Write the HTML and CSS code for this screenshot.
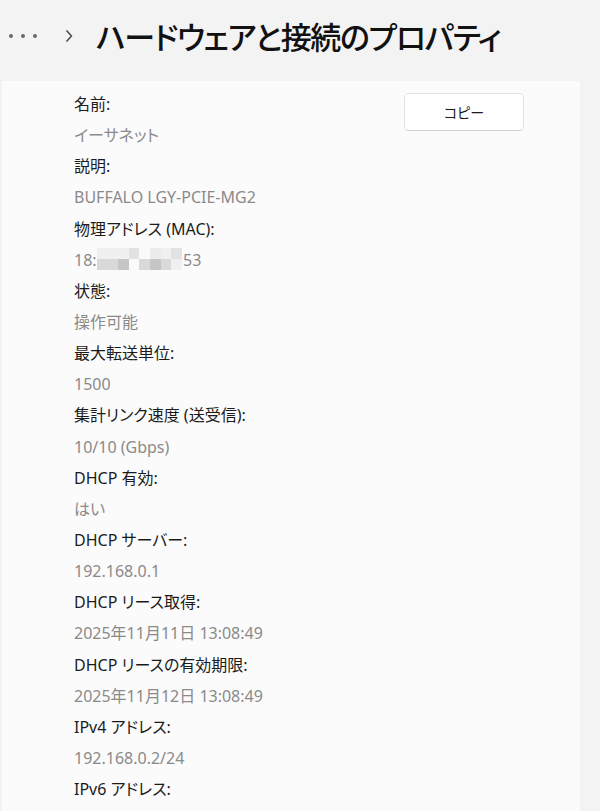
FILE: index.html
```html
<!DOCTYPE html>
<html lang="ja">

<head>
	<meta charset="utf-8" />
	<title>ハードウェアと接続のプロパティ</title>
	<link rel="stylesheet" href="styles.css">
</head>

<body>
	<div class="header">
		<div class="dots"><span></span><span></span><span></span></div>
		<svg class="chevron" viewBox="0 0 10 14" width="10" height="14">
			<polyline points="2.5 1.5, 7.5 7, 2.5 12.5" fill="none" stroke="#444" stroke-width="1.4"></polyline>
		</svg>
		<h1 class="title">ハードウェアと接続のプロパティ</h1>
	</div>
	<div class="card">
		<dl class="props">
			<dt>名前:</dt>
			<dd>イーサネット</dd>
			<dt>説明:</dt>
			<dd>BUFFALO LGY-PCIE-MG2</dd>
			<dt>物理アドレス (MAC):</dt>
			<dd>18:<span class="blur">
					<i class="s1"></i><i class="s1"></i><i class="s1"></i><i class="s3"></i><i class="s0"></i><i class="s2"></i><i class="s1"></i><i class="s3"></i>
					<i class="s4"></i><i class="s4"></i><i class="s6"></i><i class="s0"></i><i class="s4"></i><i class="s6"></i><i class="s4"></i><i class="s1"></i>
				</span>53</dd>
			<dt>状態:</dt>
			<dd>操作可能</dd>
			<dt>最大転送単位:</dt>
			<dd>1500</dd>
			<dt>集計リンク速度 (送受信):</dt>
			<dd>10/10 (Gbps)</dd>
			<dt>DHCP 有効:</dt>
			<dd>はい</dd>
			<dt>DHCP サーバー:</dt>
			<dd>192.168.0.1</dd>
			<dt>DHCP リース取得:</dt>
			<dd>2025年11月11日 13:08:49</dd>
			<dt>DHCP リースの有効期限:</dt>
			<dd>2025年11月12日 13:08:49</dd>
			<dt>IPv4 アドレス:</dt>
			<dd>192.168.0.2/24</dd>
			<dt>IPv6 アドレス:</dt>
			<dd></dd>
		</dl>
		<button class="copy">コピー</button>
	</div>
</body>

</html>
```

FILE: styles.css
```css
body {
	margin: 0;
	background: #f3f3f3;
	font-family: "Noto Sans", "Noto Sans CJK JP", sans-serif;
	font-feature-settings: "palt";
	color: #1b1b1b;
	height: 811px;
	overflow: hidden;
}

.header {
	display: flex;
	align-items: center;
	height: 70px;
	padding-left: 9px;
}

.dots {
	display: flex;
	gap: 8px;
	margin-top: 2px;
}

.dots span {
	width: 4px;
	height: 4px;
	border-radius: 50%;
	background: #6a6a6a;
}

.chevron {
	margin-left: 27px;
	margin-top: 2px;
}

.title {
	margin: 0 0 0 22px;
	font-family: "Noto Sans CJK JP", sans-serif;
	font-size: 31px;
	font-weight: 500;
	letter-spacing: -1.3px;
	color: #111;
}

.card {
	margin: 11px 20px 0 2px;
	background: #fbfbfb;
	height: 800px;
	display: flex;
	justify-content: space-between;
	align-items: flex-start;
}

.props {
	margin: 8px 0 0 72px;
	font-size: 16px;
	line-height: 31.14px;
}

.props dt {
	color: #1b1b1b;
}

.props dd {
	margin: 0;
	color: #8a8a8a;
	min-height: 31.14px;
}

.blur {
	display: inline-grid;
	grid-template-columns: repeat(8, 10.7px);
	grid-template-rows: 11px 11px;
	vertical-align: middle;
	margin: -4px 1px 0 0;
}

.blur i {
	display: block;
}

.s0 { background: #fafafa; }
.s1 { background: #f0f0f0; }
.s2 { background: #ececec; }
.s3 { background: #e2e2e2; }
.s4 { background: #d9d9d9; }
.s6 { background: #c6c6c6; }

.copy {
	margin: 12px 56px 0 0;
	width: 120px;
	height: 38px;
	background: #fefefe;
	border: 1px solid #e3e3e3;
	border-bottom-color: #d0d0d0;
	border-radius: 5px;
	font-family: "Noto Sans CJK JP", sans-serif;
	font-feature-settings: "palt";
	font-size: 14px;
	color: #1b1b1b;
}
```
